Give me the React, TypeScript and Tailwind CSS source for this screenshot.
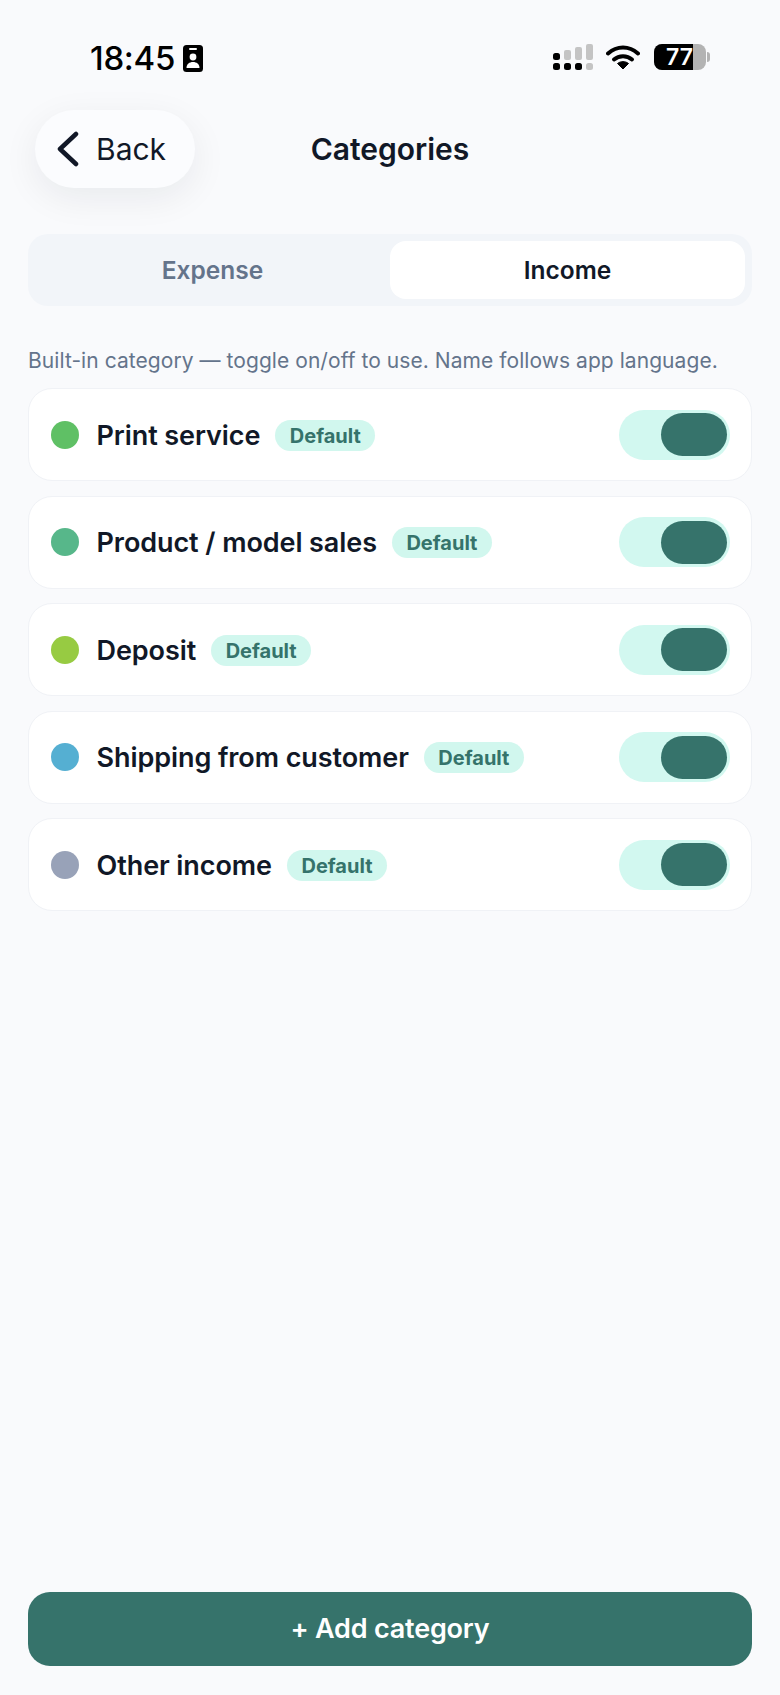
const categories = [
  { name: "Print service", color: "bg-[#5fc065]" },
  { name: "Product / model sales", color: "bg-[#57b78a]" },
  { name: "Deposit", color: "bg-[#97cb42]" },
  { name: "Shipping from customer", color: "bg-[#55afd2]" },
  { name: "Other income", color: "bg-[#98a2b8]" },
];

function StatusIcons() {
  return (
    <div className="mt-[1px] flex items-center">
      <svg width="42" height="26" viewBox="0 0 42 26" className="mr-[12px]">
        <rect x="1" y="9" width="7" height="7" rx="2.500" fill="#000" />
        <rect x="12" y="6" width="7" height="10" rx="2" fill="#c4c4c4" />
        <rect x="23" y="3" width="7" height="13" rx="2" fill="#c4c4c4" />
        <rect x="34" y="0" width="7" height="16" rx="2" fill="#c4c4c4" />
        <rect x="1" y="19" width="7" height="7" rx="2.500" fill="#000" />
        <rect x="12" y="19" width="7" height="7" rx="2.500" fill="#000" />
        <rect x="23" y="19" width="7" height="7" rx="2.500" fill="#000" />
        <rect x="34" y="19" width="7" height="7" rx="2.500" fill="#c4c4c4" />
      </svg>
      <svg width="34" height="26" viewBox="0 0 34 26" className="mr-[14px]">
        <path d="M2 9.5C11 1.500 23 1.500 32 9.5" fill="none" stroke="#000" strokeWidth="4" strokeLinecap="round" />
        <path d="M8 15.5C13 11 21 11 26 15.5" fill="none" stroke="#000" strokeWidth="4" strokeLinecap="round" />
        <path d="M17 25L11.5 19.5C14.5 17 19.5 17 22.5 19.5Z" fill="#000" stroke="#000" strokeLinejoin="round" />
      </svg>
      <div className="relative flex h-[26px] w-[52px] items-center rounded-[8px] bg-[#b3b3b3]">
        <div className="h-full w-[39px] rounded-l-[8px] bg-black" />
        <span className="absolute left-[12px] top-[1px] text-[23px] font-semibold leading-[24px] text-white">77</span>
      </div>
      <div className="ml-[1px] h-[10px] w-[3px] rounded-r-full bg-[#b3b3b3]" />
    </div>
  );
}

function BadgeIcon() {
  return (
    <svg width="20" height="27" viewBox="0 0 20 27" className="ml-[8px]">
      <rect width="20" height="27" rx="3.5" fill="#000" />
      <rect x="6" y="3" width="8" height="2" rx="1" fill="#fff" />
      <circle cx="10" cy="12" r="3.4" fill="#fff" />
      <path d="M3.500 23c0-4 3-6 6.500-6s6.500 2 6.500 6z" fill="#fff" />
    </svg>
  );
}

export default function App() {
  return (
    <div className="flex h-[1695px] w-[780px] flex-col bg-[#f9fafc] font-['Inter',sans-serif] text-[#111827]">
      <div className="flex h-[110px] items-start justify-between pl-[90px] pr-[70px] pt-[43px]">
        <div className="flex items-center">
          <span className="text-[33px] font-medium leading-[30px] tracking-[-0.3px] text-black">18:45</span>
          <BadgeIcon />
        </div>
        <StatusIcons />
      </div>

      <div className="relative flex h-[77px] items-center justify-center">
        <button className="absolute left-[35px] top-0 flex h-[78px] w-[160px] items-center rounded-[39px] bg-[#fbfcfe] pl-[22px] shadow-[0_10px_36px_rgba(17,24,39,0.07)]">
          <svg width="22" height="36" viewBox="0 0 22 36" className="text-[#111827]">
            <path d="M19 3L3 18l16 15" fill="none" stroke="currentColor" strokeWidth="4.500" strokeLinecap="round" strokeLinejoin="round" />
          </svg>
          <span className="ml-[17px] text-[30px] leading-none">Back</span>
        </button>
        <h1 className="mt-[1px] text-[30px] font-semibold leading-none">Categories</h1>
      </div>

      <div className="mx-[28px] mt-[47px] flex h-[72px] rounded-[20px] bg-[#f2f5f9] p-[7px]">
        <div className="flex flex-1 items-center justify-center pt-[1px] text-[24.500px] font-semibold text-[#64748b]">Expense</div>
        <div className="flex flex-1 items-center justify-center rounded-[16px] bg-white pt-[1px] text-[24.500px] font-semibold text-[#111827]">Income</div>
      </div>

      <p className="mx-[28px] mt-[40px] text-[21px] leading-[30px] tracking-[0.06px] whitespace-nowrap text-[#64748b]">
        Built-in category — toggle on/off to use. Name follows app language.
      </p>

      <div className="mx-[28px] mt-[12px] flex flex-col gap-[14.500px]">
        {categories.map((c) => (
          <div key={c.name} className="flex h-[93px] items-center rounded-[24px] border border-[#f0f2f6] bg-white pl-[21.500px] pr-[21px]">
            <div className={`h-[28px] w-[28px] rounded-full ${c.color}`} />
            <span className="ml-[18px] mt-[1px] text-[27px] font-semibold leading-none tracking-[-0.08px]">{c.name}</span>
            <span className="ml-[15px] mt-[1px] flex h-[31px] items-center rounded-full bg-[#d1f7ee] px-[14.500px] pt-[1px] text-[20px] font-bold text-[#35736b]">Default</span>
            <div className="ml-auto flex h-[50px] w-[111px] items-center justify-end rounded-full bg-[#d2f8f0] pr-[3px]">
              <div className="h-[43px] w-[66px] rounded-full bg-[#36736b]" />
            </div>
          </div>
        ))}
      </div>

      <button className="mx-[28px] mb-[29px] mt-auto h-[74px] rounded-[22px] bg-[#36736b] text-[27px] font-semibold tracking-[-0.2px] text-white">+ Add category</button>
    </div>
  );
}
